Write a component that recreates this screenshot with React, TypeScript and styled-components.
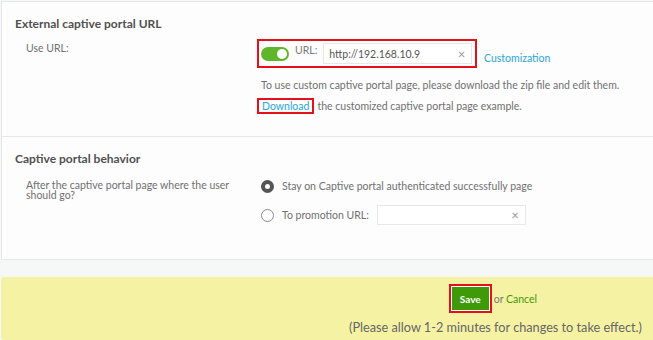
import React from 'react'
import styled, { createGlobalStyle } from 'styled-components'

const GlobalStyle = createGlobalStyle`
  html, body {
    margin: 0;
    padding: 0;
    background: #f6f7f7;
    font-family: Lato, "Liberation Sans", sans-serif;
    color: #707070;
    font-size: 10.5px;
  }
`

const Page = styled.div`
  width: 653px;
  height: 340px;
  overflow: hidden;
  padding: 1px 0 0 1px;
  box-sizing: border-box;
`

const Card = styled.section<{ $height: number }>`
  background: #fdfdfd;
  border: 1px solid #e6e8e8;
  border-right: none;
  height: ${p => p.$height}px;
  box-sizing: border-box;
  padding: 14px 0 0 13px;
  & + & {
    border-top: none;
  }
`

const Heading = styled.h3<{ $gap: number }>`
  margin: 0 0 ${p => p.$gap}px;
  font-size: 12px;
  font-weight: 700;
  color: #505050;
`

const Row = styled.div`
  display: grid;
  grid-template-columns: 231px 1fr;
  padding-left: 11px;
`

const Label = styled.div`
  line-height: 10px;
  padding-top: 4px;
`

const Field = styled.div`
  display: flex;
  flex-direction: column;
`

const UrlLine = styled.div`
  display: flex;
  align-items: center;
`

const Highlight = styled.div`
  border: 2px solid #e5101b;
  display: flex;
  align-items: center;
`

const UrlBox = styled(Highlight)`
  width: 220px;
  height: 29px;
  box-sizing: border-box;
  padding: 0 3px 0 2px;
  gap: 6px;
`

const Toggle = styled.span`
  width: 28px;
  height: 14px;
  border-radius: 7px;
  background: #5fb62a;
  position: relative;
  flex: none;
  &::after {
    content: '';
    position: absolute;
    right: 2px;
    top: 2px;
    width: 10px;
    height: 10px;
    border-radius: 50%;
    background: #fff;
  }
`

const SmallLabel = styled.span`
  color: #7a7a7a;
  margin-top: -7px;
`

const Input = styled.div<{ $width: number; $height: number }>`
  width: ${p => p.$width}px;
  height: ${p => p.$height}px;
  border: 1px solid #e8e8e8;
  background: #fff;
  box-sizing: border-box;
  display: flex;
  align-items: center;
  justify-content: space-between;
  padding: 0 6px 0 5px;
  color: #555;
  flex: none;
`

const Clear = styled.span`
  color: #9a9a9a;
  font-size: 13px;
`

const Link = styled.a`
  color: #2aa7e0;
  text-decoration: none;
`

const CustomLink = styled(Link)`
  margin: 8px 0 0 7px;
`

const Note = styled.p`
  margin: 11px 0 0 4px;
`

const DownloadLine = styled.div`
  display: flex;
  align-items: center;
  margin-top: 7px;
  gap: 3px;
`

const DownloadBox = styled(Highlight)`
  height: 16px;
  box-sizing: border-box;
  padding: 0 3px;
`

const Options = styled.div`
  display: flex;
  flex-direction: column;
  gap: 9px;
  padding-left: 4px;
`

const Option = styled.label`
  display: flex;
  align-items: center;
  gap: 8px;
  min-height: 20px;
`

const Radio = styled.span<{ $checked?: boolean }>`
  width: 13px;
  height: 13px;
  border-radius: 50%;
  box-sizing: border-box;
  flex: none;
  border: ${p => (p.$checked ? '4px solid #555' : '1px solid #8a8a8a')};
  background: #fff;
`

const Footer = styled.footer`
  margin-top: 17px;
  background: #f6f2a3;
  border-radius: 3px 0 0 3px;
  height: 63px;
  display: flex;
  flex-direction: column;
  align-items: flex-end;
  padding: 7px 11px 0 0;
  box-sizing: border-box;
`

const Actions = styled.div`
  display: flex;
  align-items: center;
  margin-right: 105px;
  color: #777;
`

const SaveBox = styled(Highlight)`
  padding: 1px;
  background: #fff;
`

const SaveButton = styled.button`
  background: #3e9a09;
  color: #fff;
  border: none;
  font-family: inherit;
  font-weight: 700;
  font-size: 10px;
  width: 37px;
  height: 23px;
  padding: 0;
`

const Cancel = styled.a`
  color: #3e9a09;
  margin-left: 2px;
`

const Or = styled.span`
  color: #777;
`

const Hint = styled.div`
  margin-top: 6px;
  font-size: 12.7px;
  color: #666;
`

export default function App() {
  return (
    <Page>
      <GlobalStyle />
      <Card $height={136}>
        <Heading $gap={8}>External captive portal URL</Heading>
        <Row>
          <Label>Use URL:</Label>
          <Field>
            <UrlLine>
              <UrlBox>
                <Toggle />
                <SmallLabel>URL:</SmallLabel>
                <Input $width={149} $height={21}>
                  http://192.168.10.9 <Clear>×</Clear>
                </Input>
              </UrlBox>
              <CustomLink>Customization</CustomLink>
            </UrlLine>
            <Note>To use custom captive portal page, please download the zip file and edit them.</Note>
            <DownloadLine>
              <DownloadBox>
                <Link>Download</Link>
              </DownloadBox>
              the customized captive portal page example.
            </DownloadLine>
          </Field>
        </Row>
      </Card>
      <Card $height={123}>
        <Heading $gap={10}>Captive portal behavior</Heading>
        <Row>
          <Label>After the captive portal page where the user should go?</Label>
          <Options>
            <Option>
              <Radio $checked />
              Stay on Captive portal authenticated successfully page
            </Option>
            <Option>
              <Radio />
              To promotion URL:
              <Input $width={149} $height={20}>
                <span />
                <Clear>×</Clear>
              </Input>
            </Option>
          </Options>
        </Row>
      </Card>
      <Footer>
        <Actions>
          <SaveBox>
            <SaveButton>Save</SaveButton>
          </SaveBox>
          <Cancel>
            <Or>or</Or> Cancel
          </Cancel>
        </Actions>
        <Hint>(Please allow 1-2 minutes for changes to take effect.)</Hint>
      </Footer>
    </Page>
  )
}
